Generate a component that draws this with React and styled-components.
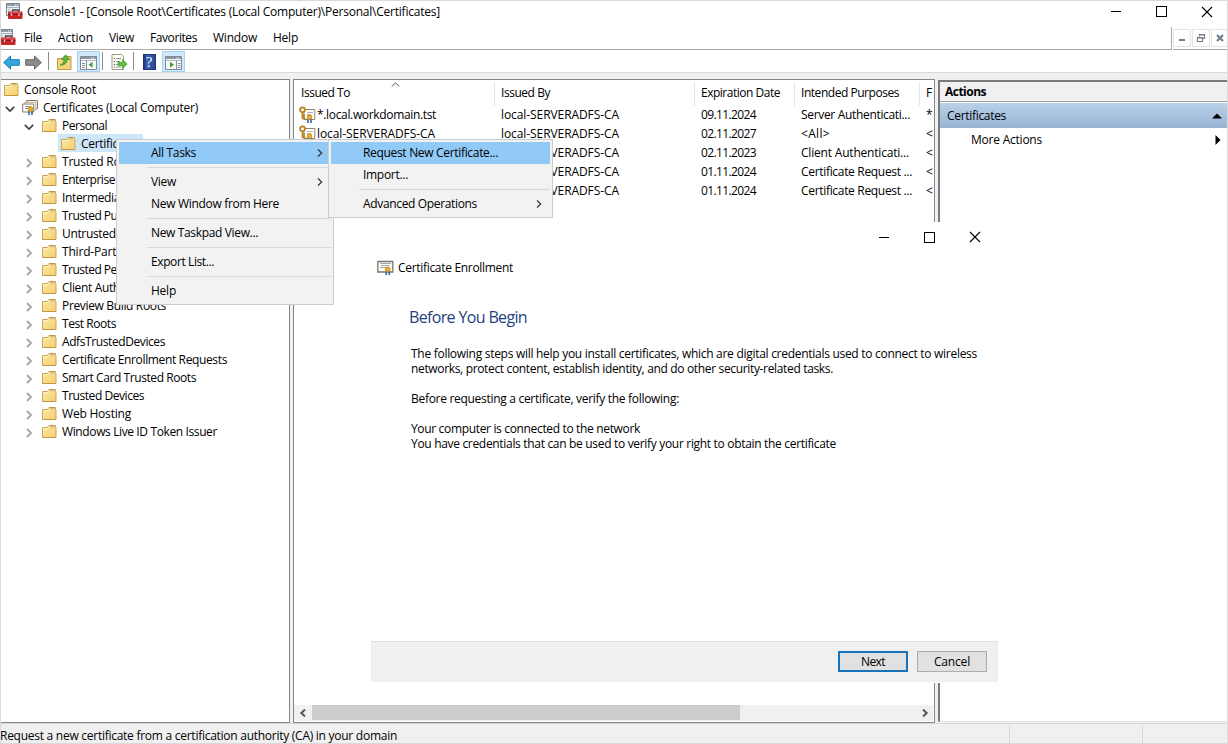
import React, { useLayoutEffect, useRef, useState } from "react";
import styled, { createGlobalStyle, css } from "styled-components";

const GlobalStyle = createGlobalStyle`
  * {
    box-sizing: border-box;
  }
  body {
    margin: 0;
    overflow: hidden;
    font-family: "Open Sans", "Noto Sans", sans-serif;
    font-size: 12px;
    line-height: 15px;
    color: #000;
  }
  svg {
    display: block;
    flex: none;
  }
`;

const tree = [
  { text: "Trusted Root Certification Authorities", width: 199 },
  { text: "Enterprise Trust", width: 82 },
  { text: "Intermediate Certification Authorities", width: 195 },
  { text: "Trusted Publishers", width: 95 },
  { text: "Untrusted Certificates", width: 115 },
  { text: "Third-Party Root Certification Authorities", width: 219 },
  { text: "Trusted People", width: 77 },
  { text: "Client Authentication Issuers", width: 150 },
  { text: "Preview Build Roots", width: 104 },
  { text: "Test Roots", width: 54 },
  { text: "AdfsTrustedDevices", width: 103 },
  { text: "Certificate Enrollment Requests", width: 165 },
  { text: "Smart Card Trusted Roots", width: 134 },
  { text: "Trusted Devices", width: 82 },
  { text: "Web Hosting", width: 69 },
  { text: "Windows Live ID Token Issuer", width: 155 }
];

const CA = "local-SERVERADFS-CA";
const certs = [
  { to: "*.local.workdomain.tst", toWidth: 119, date: "09.11.2024", use: "Server Authenticati...", useWidth: 109, name: "*." },
  { to: CA, toWidth: 118, date: "02.11.2027", use: "<All>", useWidth: 29, name: "<" },
  { to: CA, toWidth: 118, date: "02.11.2023", use: "Client Authenticati...", useWidth: 108, name: "<" },
  { to: CA, toWidth: 118, date: "01.11.2024", use: "Certificate Request ...", useWidth: 111, name: "<" },
  { to: CA, toWidth: 118, date: "01.11.2024", use: "Certificate Request ...", useWidth: 111, name: "<" }
];

// spreads or tightens the letters so the label takes the given width
const Text = ({ width, children, ...rest }) => {
  const ref = useRef(null);
  const [spacing, setSpacing] = useState(-0.2);

  useLayoutEffect(() => {
    if (!width) return;
    const natural = ref.current.getBoundingClientRect().width;
    const length = ref.current.textContent.length;
    setSpacing((prev) => prev + (width - natural) / length);
  }, [width]);

  return (
    <Label ref={ref} style={{ letterSpacing: `${spacing}px` }} {...rest}>
      {children}
    </Label>
  );
};

const FolderIcon = () => (
  <svg width="15" height="15" viewBox="0 0 15 15">
    <defs>
      <linearGradient id="folder" x1="0" y1="0" x2="1" y2="1">
        <stop offset="0" stopColor="#fdebab" />
        <stop offset="1" stopColor="#f3cd6c" />
      </linearGradient>
    </defs>
    <path d="M.5 3.5h5l1.5-2h6.5v2h.5v10H.5z" fill="url(#folder)" stroke="#cfa650" />
    <path d="M1 4.5h5l1-1.2h6" fill="none" stroke="#fff3c6" />
    <path d="M8 1.5h4M8 3h4.5" stroke="#a98a45" strokeWidth=".7" />
    <path d="M.5 13.5h13.5" stroke="#c5983f" />
  </svg>
);

const Ribbon = ({ x = 0, y = 0 }) => (
  <g transform={`translate(${x} ${y})`}>
    <path d="M-1.5 2v4M1.5 2v4" fill="none" stroke="#336a9b" strokeWidth="1.6" />
    <circle r="2.7" fill="#d99b20" />
    <circle r="1.1" fill="#f2c34c" />
  </g>
);

const StoreIcon = () => (
  <svg width="17" height="17" viewBox="0 0 17 17">
    <path d="M4.5 1.5h11v8h-11z" fill="#fff" stroke="#8d7b64" />
    <path d="M2.8 3.2h11v8h-11z" fill="#fff" stroke="#b5a894" />
    <path d="M.7 5h11v8H.7z" fill="#fff" stroke="#8d7b64" />
    <path d="M3 7.5h6M3 9.5h4" stroke="#9098b0" />
    <Ribbon x={8.5} y={10} />
  </svg>
);

const EnrollIcon = () => (
  <svg width="17" height="15" viewBox="0 0 17 15">
    <path d="M.8 1.5h15v10.5H.8z" fill="#fbfaf6" stroke="#817464" strokeWidth="1.3" />
    <path d="M3 3.5h11M4 5.5h8M3 7.5h6" stroke="#a3a8b8" />
    <Ribbon x={10.7} y={9.3} />
  </svg>
);

const KeyCertIcon = () => (
  <svg width="17" height="17" viewBox="0 0 17 17">
    <path d="M5 3.5h10.8v10H5z" fill="#fff" stroke="#94826a" />
    <path d="M8 6.5h6M8 8.5h4" stroke="#a9b0c4" />
    <circle cx="3.5" cy="3.7" r="2.4" fill="#fff" stroke="#b9841f" strokeWidth="1.8" />
    <path d="M3.5 6v7M3.5 9.5H6M3.5 12.5h3" stroke="#b9841f" strokeWidth="1.8" fill="none" />
    <Ribbon x={10.5} y={11} />
  </svg>
);

const ConsoleIcon = () => (
  <svg width="17" height="17" viewBox="0 0 17 17">
    <path d="M.5.5h13v12H.5z" fill="#eef1f4" stroke="#7c8791" />
    <path d="M1 1h12v2H1z" fill="#8e9ba8" />
    <path d="M9 2h1M11 2h1" stroke="#fff" />
    <path d="M1 4.5h12M2 6.5h2M2 8.5h2" stroke="#a4b0ba" />
    <path d="M6.5 9.5V7h6v2.5" fill="none" stroke="#444" strokeWidth="1.3" />
    <rect x="2" y="8.5" width="14.5" height="7.5" rx="1" fill="#c9262c" />
    <path d="M2 11.5h14.5" stroke="#8e1519" />
    <path d="M3 9.2h13" stroke="#e5666a" />
    <path d="M5.5 10.5v2.3M13 10.5v2.3" stroke="#e8d6d6" strokeWidth="1.4" />
  </svg>
);

const ArrowIcon = ({ fill, stroke, flip }) => (
  <svg width="17" height="15" viewBox="0 0 17 15">
    <path
      d="M.7 7.5 7.5 1v3.7h8.8v5.6H7.5V14z"
      fill={fill}
      stroke={stroke}
      transform={flip ? "translate(17 0) scale(-1 1)" : undefined}
    />
  </svg>
);

const UpIcon = () => (
  <svg width="15" height="16" viewBox="0 0 15 16">
    <path d="M.5 4.5h5l1.5-2h7v13H.5z" fill="#f3d47e" stroke="#c29a46" />
    <path d="M3 11c3-1 4-3 4-5.5H4.5L8.7.8l3.8 4.7H10c0 4-3 6-7 5.5z" fill="#58b83a" stroke="#388a22" strokeWidth=".7" />
  </svg>
);

const PanelIcon = ({ right }) => (
  <svg width="17" height="15" viewBox="0 0 17 15">
    <path d="M.5 1.5h16v13H.5z" fill="#f7f8fa" stroke="#818b98" />
    <path d="M1 2h15v2H1z" fill="#8b97a5" />
    <path d="M11 3h1M13 3h1" stroke="#fff" />
    <path d="M1 5.5h15" stroke="#b2bac4" />
    {right ? (
      <>
        <path d="M11.5 5.5v9M13 8.5h2.5M13 10.5h2.5M13 12.5h2.5" stroke="#8490a0" />
        <path d="M5 6.8v6l4-3z" fill="#35a136" />
      </>
    ) : (
      <>
        <path d="M6.5 5.5v9M2 8.5h3M2 10.5h3M2 12.5h3" stroke="#8490a0" />
        <path d="M12.5 6.8v6l-4-3z" fill="#35a136" />
      </>
    )}
  </svg>
);

const ExportIcon = () => (
  <svg width="17" height="16" viewBox="0 0 17 16">
    <path d="M1 .5h9.5l2 2v13H1z" fill="#fffdf0" stroke="#9b9b8a" />
    <path d="M5 4.5h5M5 7.5h4M5 10.5h4M5 13h5" stroke="#8993a4" />
    <path d="M2.7 4.5H4M2.7 7.5H4M2.7 10.5H4M2.7 13H4" stroke="#51606f" />
    <path d="M7 8.3h4.5V5.5l4.7 4.5-4.7 4.5v-2.8H7z" fill="#66bf43" stroke="#449b2c" strokeWidth=".7" />
  </svg>
);

const CrossIcon = () => (
  <svg width="12" height="12" viewBox="0 0 12 12">
    <path d="M1 1l10 10M11 1 1 11" stroke="#000" strokeWidth="1.1" />
  </svg>
);

const Chevron = ({ open }) => (
  <svg width="10" height="10" viewBox="0 0 10 10">
    <path
      d={open ? "M.8 2.8 5 7l4.2-4.2" : "M3 1l4 4-4 4"}
      fill="none"
      stroke={open ? "#404040" : "#a6a6a6"}
      strokeWidth={open ? 1.7 : 1.8}
    />
  </svg>
);

const SmallArrow = ({ left, bold }) => (
  <svg width="8" height="8" viewBox="0 0 8 8">
    <path
      d={left ? "M6 .5 2.3 4 6 7.5" : "M2 .5 5.7 4 2 7.5"}
      fill="none"
      stroke={bold ? "#505050" : "#333"}
      strokeWidth={bold ? 1.9 : 1.2}
    />
  </svg>
);

const CaptionButtons = () => (
  <Caption>
    <MinLine />
    <MaxBox />
    <CrossIcon />
  </Caption>
);

const TreeItem = ({ level, icon, text, width, open, leaf, selected }) => (
  <TreeRow $level={level}>
    {level > 0 && <Expander>{!leaf && <Chevron open={open} />}</Expander>}
    <TreeLabel $selected={selected}>
      <IconSlot $wide={level === 1}>{icon || <FolderIcon />}</IconSlot>
      <Text width={width}>{text}</Text>
    </TreeLabel>
  </TreeRow>
);

const Item = ({ text, width, active, arrow }) => (
  <MenuItem $active={active}>
    <Text width={width}>{text}</Text>
    {arrow && <SmallArrow />}
  </MenuItem>
);

const Dialog = () => (
  <Wizard>
    <CaptionButtons />
    <WizardTitle>
      <EnrollIcon />
      <Text width={115}>Certificate Enrollment</Text>
    </WizardTitle>
    <WizardBody>
      <Heading>
        <Text width={118}>Before You Begin</Text>
      </Heading>
      <Paragraph>
        <Text width={566}>
          The following steps will help you install certificates, which are digital credentials used to connect to wireless
        </Text>
        <Text width={422}>
          networks, protect content, establish identity, and do other security-related tasks.
        </Text>
      </Paragraph>
      <Paragraph>
        <Text width={268}>Before requesting a certificate, verify the following:</Text>
      </Paragraph>
      <Paragraph>
        <Text width={229}>Your computer is connected to the network</Text>
        <Text width={425}>You have credentials that can be used to verify your right to obtain the certificate</Text>
      </Paragraph>
    </WizardBody>
    <WizardFooter>
      <Button $primary>
        <Text width={24}>Next</Text>
      </Button>
      <Button>
        <Text width={36}>Cancel</Text>
      </Button>
    </WizardFooter>
  </Wizard>
);

const App = () => {
  return (
    <Window>
      <GlobalStyle />
      <TitleBar>
        <ConsoleIcon />
        <Text width={413}>Console1 - [Console Root\Certificates (Local Computer)\Personal\Certificates]</Text>
        <CaptionButtons />
      </TitleBar>

      <MenuBar>
        <MenuNames>
          <ConsoleIcon />
          <Text width={18}>File</Text>
          <Text width={35}>Action</Text>
          <Text width={25}>View</Text>
          <Text width={47}>Favorites</Text>
          <Text width={44}>Window</Text>
          <Text width={25}>Help</Text>
        </MenuNames>
        <ChildButtons>
          <ChildButton>
            <svg width="10" height="10" viewBox="0 0 10 10">
              <path d="M2 7h6" stroke="#75808b" strokeWidth="2" />
            </svg>
          </ChildButton>
          <ChildButton>
            <svg width="10" height="10" viewBox="0 0 10 10">
              <path d="M3.5 3.5V1.5h5v4h-2M1.5 4.5h5v4h-5zM3.5 2h5M1.5 5h5" fill="none" stroke="#75808b" strokeWidth="1.2" />
            </svg>
          </ChildButton>
          <ChildButton>
            <svg width="10" height="10" viewBox="0 0 10 10">
              <path d="M2 2l6 6M8 2 2 8" stroke="#75808b" strokeWidth="2.2" />
            </svg>
          </ChildButton>
        </ChildButtons>
      </MenuBar>

      <ToolBar>
        <Tool $width={20}>
          <ArrowIcon fill="#35a8e0" stroke="#1b7db5" />
        </Tool>
        <Tool $width={25}>
          <ArrowIcon fill="#8b8b8b" stroke="#666" flip />
        </Tool>
        <ToolLine />
        <Tool $width={26} $shift={1}>
          <UpIcon />
        </Tool>
        <Tool $width={23} $on>
          <PanelIcon />
        </Tool>
        <ToolLine />
        <Tool $width={26} $shift={2}>
          <ExportIcon />
        </Tool>
        <ToolLine />
        <Tool $width={26}>
          <HelpBook>?</HelpBook>
        </Tool>
        <Tool $width={23} $on>
          <PanelIcon right />
        </Tool>
      </ToolBar>

      <Panes>
        <TreePane>
          <TreeItem level={0} text="Console Root" width={72} />
          <TreeItem level={1} icon={<StoreIcon />} text="Certificates (Local Computer)" width={155} open />
          <TreeItem level={2} text="Personal" width={45} open />
          <TreeItem level={3} text="Certificates" width={59} leaf selected />
          {tree.map((item) => (
            <TreeItem key={item.text} level={2} text={item.text} width={item.width} />
          ))}
        </TreePane>

        <ListPane>
          <ListHead>
            <HeadCell>
              <Text width={49}>Issued To</Text>
              <SortMark width="9" height="5" viewBox="0 0 9 5">
                <path d="M.7 4.5 4.5.9l3.8 3.6" fill="none" stroke="#555" />
              </SortMark>
            </HeadCell>
            <HeadCell>
              <Text width={49}>Issued By</Text>
            </HeadCell>
            <HeadCell>
              <Text width={79}>Expiration Date</Text>
            </HeadCell>
            <HeadCell>
              <Text width={98}>Intended Purposes</Text>
            </HeadCell>
            <HeadCell>F</HeadCell>
          </ListHead>
          {certs.map((cert, i) => (
            <ListRow key={i}>
              <NameCell>
                <KeyCertIcon />
                <Text width={cert.toWidth}>{cert.to}</Text>
              </NameCell>
              <Cell>
                <Text width={118}>{CA}</Text>
              </Cell>
              <Cell>
                <Text width={55}>{cert.date}</Text>
              </Cell>
              <Cell>
                <Text width={cert.useWidth}>{cert.use}</Text>
              </Cell>
              <Cell>{cert.name}</Cell>
            </ListRow>
          ))}
          <ScrollBar>
            <SmallArrow left bold />
            <Thumb />
            <SmallArrow bold />
          </ScrollBar>
        </ListPane>

        <ActionsPane>
          <ActionsTitle>
            <Text width={41}>Actions</Text>
          </ActionsTitle>
          <ActionsGroup>
            <Text width={59}>Certificates</Text>
            <svg width="10" height="6" viewBox="0 0 10 6">
              <path d="M0 5.5 5 .5l5 5z" />
            </svg>
          </ActionsGroup>
          <ActionsLink>
            <Text width={71}>More Actions</Text>
            <svg width="6" height="10" viewBox="0 0 6 10">
              <path d="M.5 0 5.5 5l-5 5z" />
            </svg>
          </ActionsLink>
        </ActionsPane>
      </Panes>

      <StatusBar>
        <StatusText>
          <Text width={397}>Request a new certificate from a certification authority (CA) in your domain</Text>
        </StatusText>
        <StatusCell $width={133} />
        <StatusCell $width={85} />
      </StatusBar>

      <Dialog />

      <ContextMenu>
        <Item text="All Tasks" width={45} active arrow />
        <MenuLine />
        <Item text="View" width={25} arrow />
        <Item text="New Window from Here" width={128} />
        <MenuLine />
        <Item text="New Taskpad View..." width={107} />
        <MenuLine />
        <Item text="Export List..." width={63} />
        <MenuLine />
        <Item text="Help" width={25} />
      </ContextMenu>
      <SubMenu>
        <Item text="Request New Certificate..." width={135} active />
        <Item text="Import..." width={45} />
        <MenuLine />
        <Item text="Advanced Operations" width={114} arrow />
      </SubMenu>
    </Window>
  );
};

export default App;

const Window = styled.div`
  position: relative;
  display: flex;
  flex-direction: column;
  width: 1228px;
  height: 744px;
  overflow: hidden;
  background: #fff;
  border: 1px solid #dadada;
`;

const Label = styled.span`
  white-space: pre;
  flex: none;
`;

const Caption = styled.div`
  display: flex;
  align-items: center;
  margin-left: auto;
`;

const MinLine = styled.i`
  width: 10px;
  height: 1px;
  background: #000;
`;

const MaxBox = styled.i`
  width: 11px;
  height: 11px;
  margin: 0 34px 0 35px;
  border: 1px solid #000;
`;

const TitleBar = styled.div`
  display: flex;
  align-items: center;
  height: 26px;
  padding: 0 14px 5px 5px;

  ${Label} {
    margin-left: 4px;
  }
`;

const MenuBar = styled.div`
  display: flex;
  height: 23px;
`;

const MenuNames = styled.div`
  display: flex;
  flex: none;
  align-items: center;
  gap: 16px;
  width: 1171px;
  padding-bottom: 1px;
  border-right: 1px solid #a8a8a8;
  border-bottom: 1px solid #a8a8a8;

  svg {
    margin: 0 -8px 0 -2px;
  }
`;

const ChildButtons = styled.div`
  display: flex;
  flex: 1;
  gap: 1px;
  min-width: 0;
  margin-left: 1px;
  padding: 2px 0;
  overflow: hidden;
  border-bottom: 1px solid #a8a8a8;
`;

const ChildButton = styled.div`
  display: flex;
  flex: none;
  align-items: center;
  justify-content: center;
  width: 18px;
  height: 18px;
  border: 1px solid #e4e4e4;
`;

const ToolBar = styled.div`
  display: flex;
  align-items: center;
  height: 23px;
  border-bottom: 1px solid #dadada;
`;

const Tool = styled.div`
  display: flex;
  align-items: center;
  justify-content: center;
  width: ${(props) => props.$width}px;
  height: 21px;
  padding-top: 2px;
  padding-left: ${(props) => props.$shift || 0}px;
  ${(props) =>
    props.$on &&
    css`
      background: #d0e8fa;
      border: 1px solid #a5d3f3;
    `}
`;

const ToolLine = styled.div`
  width: 1px;
  height: 18px;
  margin: 0 2px;
  background: #8c8c8c;
`;

const HelpBook = styled.div`
  width: 13px;
  height: 16px;
  background: linear-gradient(90deg, #23408e 2px, #3d63b5 2px, #2a4899);
  border: 1px solid #1e3678;
  color: #fff;
  font: 15px/14px "Liberation Serif", serif;
  text-align: center;
`;

const Panes = styled.div`
  display: flex;
  height: 650px;
  padding-top: 6px;
  background: #f0f0f0;
`;

const TreePane = styled.div`
  width: 289px;
  height: 644px;
  overflow: hidden;
  background: #fff;
  border: 1px solid #828790;
  border-left: none;
`;

const TreeRow = styled.div`
  display: flex;
  height: 18px;
  padding-left: ${(props) => (props.$level > 0 ? props.$level * 19 - 19 : 0)}px;
`;

const Expander = styled.div`
  display: flex;
  align-items: center;
  justify-content: center;
  width: 19px;
  padding: 3px 1px 0 0;
`;

const TreeLabel = styled.div`
  display: flex;
  align-items: center;
  height: 18px;
  padding: 0 3px 0 1px;
  background: ${(props) => (props.$selected ? "#cde6f8" : "transparent")};
`;

const IconSlot = styled.div`
  display: flex;
  justify-content: center;
  width: ${(props) => (props.$wide ? 18 : 19)}px;
  margin-right: ${(props) => (props.$wide ? 4 : 3)}px;
`;

const ListPane = styled.div`
  display: flex;
  flex-direction: column;
  width: 642px;
  height: 644px;
  margin-left: 3px;
  background: #fff;
  border: 1px solid #828790;
`;

const listColumns = css`
  display: grid;
  grid-template-columns: 201px 200px 100px 125px 13px;
`;

const ListHead = styled.div`
  ${listColumns}
  height: 26px;
`;

const HeadCell = styled.div`
  position: relative;
  height: 24px;
  margin-top: 2px;
  padding: 3px 0 0 6px;
  overflow: hidden;
  border-right: 1px solid #e4e4e4;

  &:first-child {
    padding-left: 7px;
  }
  &:last-child {
    border-right: none;
  }
`;

const SortMark = styled.svg`
  position: absolute;
  top: 0;
  left: 97px;
`;

const ListRow = styled.div`
  ${listColumns}
  height: 19px;
`;

const Cell = styled.div`
  padding: 1px 0 0 6px;
  overflow: hidden;
`;

const NameCell = styled.div`
  display: flex;
  padding: 0 0 0 5px;

  ${Label} {
    margin: 1px 0 0 1px;
  }
`;

const ScrollBar = styled.div`
  display: flex;
  align-items: center;
  height: 16px;
  margin: auto 1px 1px 0;
  padding: 0 4px 1px 5px;
  background: #f0f0f0;

  svg:last-child {
    margin-left: auto;
  }
`;

const Thumb = styled.div`
  width: 428px;
  height: 15px;
  margin-left: 5px;
  background: #cdcdcd;
`;

const ActionsPane = styled.div`
  flex: 1;
  height: 642px;
  margin: 1px 0 0 3px;
  background: #fff;
  border-top: 2px solid #7a7a7a;
  border-left: 2px solid #7a7a7a;
  border-bottom: 1px solid #e3e3e3;
`;

const ActionsTitle = styled.div`
  height: 20px;
  padding: 2px 0 0 5px;
  background: #f0f0f0;
  border-bottom: 1px solid #a0a0a0;
  font-weight: 700;
`;

const ActionsGroup = styled.div`
  display: flex;
  align-items: center;
  justify-content: space-between;
  height: 25px;
  margin-top: 1px;
  padding: 0 5px 0 7px;
  background: linear-gradient(#b9d1ea, #98b4d2);
`;

const ActionsLink = styled.div`
  display: flex;
  align-items: center;
  justify-content: space-between;
  height: 23px;
  padding: 0 6px 0 31px;
`;

const StatusBar = styled.div`
  display: flex;
  height: 20px;
  background: #f0f0f0;
  border-top: 1px solid #d7d7d7;
`;

const StatusText = styled.div`
  flex: 1;
  margin-left: -1px;
  padding-top: 4px;
`;

const StatusCell = styled.div`
  width: ${(props) => props.$width}px;
  margin-top: 1px;
  border-left: 1px solid #d7d7d7;
`;

const Wizard = styled.div`
  position: absolute;
  top: 221px;
  left: 370px;
  display: flex;
  flex-direction: column;
  width: 627px;
  height: 461px;
  background: #fff;

  > ${Caption} {
    height: 30px;
    margin-right: 17px;
  }
`;

const WizardTitle = styled.div`
  display: flex;
  align-items: center;
  gap: 4px;
  height: 31px;
  padding-left: 6px;
`;

const WizardBody = styled.div`
  flex: 1;
  padding: 24px 0 0 38px;
`;

const Heading = styled.div`
  height: 20px;
  margin-bottom: 19px;
  color: #1f3f80;
  font-size: 16px;
  line-height: 20px;
`;

const Paragraph = styled.div`
  display: flex;
  flex-direction: column;
  align-items: flex-start;
  margin: 0 0 15px 2px;
`;

const WizardFooter = styled.div`
  display: flex;
  justify-content: flex-end;
  gap: 9px;
  height: 42px;
  padding: 9px 11px 0 0;
  background: #f0f0f0;
  border-top: 1px solid #dfdfdf;
  border-bottom: 1px solid #fff;
`;

const Button = styled.button`
  display: flex;
  align-items: center;
  justify-content: center;
  width: 70px;
  height: 21px;
  padding: 0;
  background: #e1e1e1;
  border: ${(props) => (props.$primary ? "2px solid #1a73b9" : "1px solid #adadad")};
  color: #000;
  font: inherit;
`;

const ContextMenu = styled.div`
  position: absolute;
  top: 138px;
  left: 115px;
  width: 218px;
  padding: 2px;
  background: #f2f2f2;
  border: 1px solid #ccc;
`;

const SubMenu = styled(ContextMenu)`
  left: 327px;
  width: 225px;
`;

const MenuItem = styled.div`
  display: flex;
  align-items: center;
  justify-content: space-between;
  height: 22px;
  padding: 0 7px 1px 32px;
  background: ${(props) => (props.$active ? "#91c9f7" : "transparent")};
`;

const MenuLine = styled.div`
  height: 1px;
  margin: 3px 0 3px 28px;
  background: #d7d7d7;
`;
